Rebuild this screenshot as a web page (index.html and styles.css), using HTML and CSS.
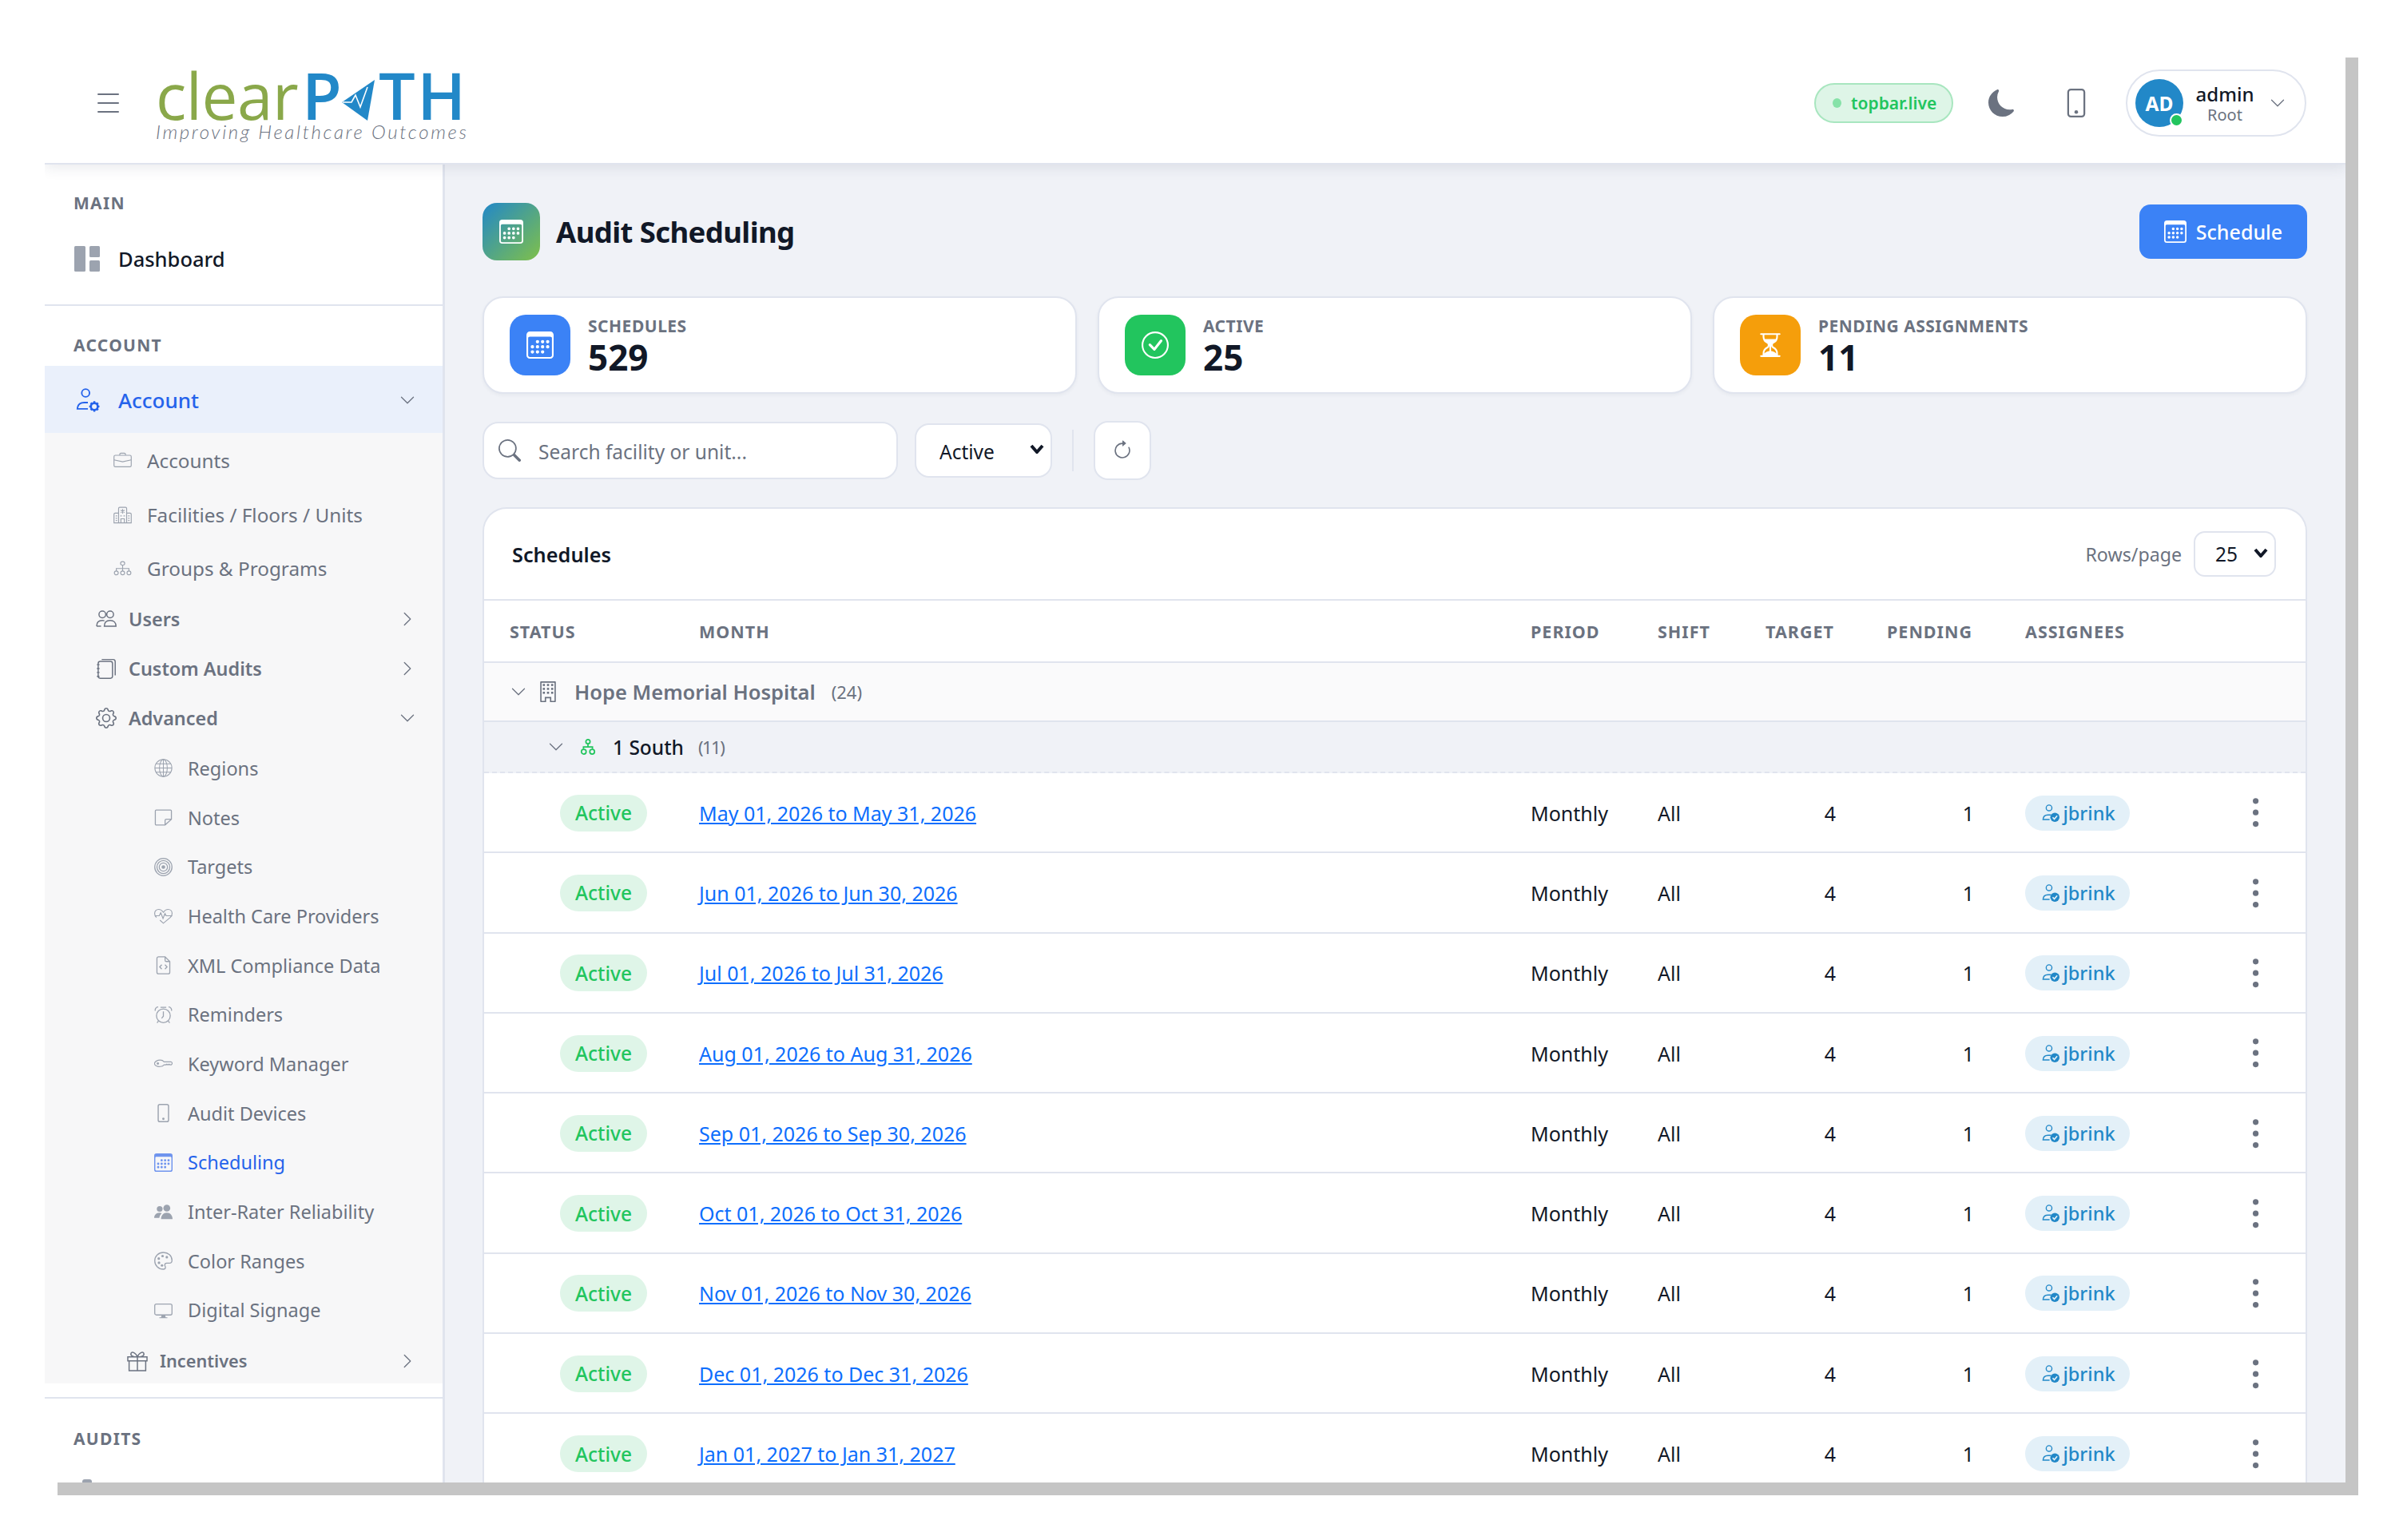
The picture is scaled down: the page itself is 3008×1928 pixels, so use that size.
FILE: index.html
```html
<!DOCTYPE html>
<html lang="en">
<head>
<meta charset="utf-8">
<title>Audit Scheduling</title>
<link rel="stylesheet" href="styles.css">
</head>
<body>
<svg class="defs" width="0" height="0" aria-hidden="true">
  <symbol id="i-cal" viewBox="0 0 16 16"><path d="M14 0H2a2 2 0 0 0-2 2v12a2 2 0 0 0 2 2h12a2 2 0 0 0 2-2V2a2 2 0 0 0-2-2zM1 3.857C1 3.384 1.448 3 2 3h12c.552 0 1 .384 1 .857v10.286c0 .473-.448.857-1 .857H2c-.552 0-1-.384-1-.857V3.857z"/><path d="M6.5 7a1 1 0 1 0 0-2 1 1 0 0 0 0 2zm3 0a1 1 0 1 0 0-2 1 1 0 0 0 0 2zm3 0a1 1 0 1 0 0-2 1 1 0 0 0 0 2zm-9 3a1 1 0 1 0 0-2 1 1 0 0 0 0 2zm3 0a1 1 0 1 0 0-2 1 1 0 0 0 0 2zm3 0a1 1 0 1 0 0-2 1 1 0 0 0 0 2zm3 0a1 1 0 1 0 0-2 1 1 0 0 0 0 2zm-9 3a1 1 0 1 0 0-2 1 1 0 0 0 0 2zm3 0a1 1 0 1 0 0-2 1 1 0 0 0 0 2zm3 0a1 1 0 1 0 0-2 1 1 0 0 0 0 2z"/></symbol>
  <symbol id="i-moon" viewBox="0 0 16 16"><path d="M6 .278a.768.768 0 0 1 .08.858 7.208 7.208 0 0 0-.878 3.46c0 4.021 3.278 7.277 7.318 7.277.527 0 1.04-.055 1.533-.16a.787.787 0 0 1 .81.316.733.733 0 0 1-.031.893A8.349 8.349 0 0 1 8.344 16C3.734 16 0 12.286 0 7.71 0 4.266 2.114 1.312 5.124.06A.752.752 0 0 1 6 .278z"/></symbol>
  <symbol id="i-phone" viewBox="0 0 16 16"><path d="M11 1a1 1 0 0 1 1 1v12a1 1 0 0 1-1 1H5a1 1 0 0 1-1-1V2a1 1 0 0 1 1-1h6zM5 0a2 2 0 0 0-2 2v12a2 2 0 0 0 2 2h6a2 2 0 0 0 2-2V2a2 2 0 0 0-2-2H5z"/><path d="M8 14a1 1 0 1 0 0-2 1 1 0 0 0 0 2z"/></symbol>
  <symbol id="i-down" viewBox="0 0 16 16"><path d="M1.646 4.646a.5.5 0 0 1 .708 0L8 10.293l5.646-5.647a.5.5 0 0 1 .708.708l-6 6a.5.5 0 0 1-.708 0l-6-6a.5.5 0 0 1 0-.708z"/></symbol>
  <symbol id="i-right" viewBox="0 0 16 16"><path d="M4.646 1.646a.5.5 0 0 1 .708 0l6 6a.5.5 0 0 1 0 .708l-6 6a.5.5 0 0 1-.708-.708L10.293 8 4.646 2.354a.5.5 0 0 1 0-.708z"/></symbol>
  <symbol id="i-search" viewBox="0 0 16 16"><path d="M11.742 10.344a6.5 6.5 0 1 0-1.397 1.398h-.001c.03.04.062.078.098.115l3.85 3.85a1 1 0 0 0 1.415-1.414l-3.85-3.85a1.007 1.007 0 0 0-.115-.1zM12 6.5a5.5 5.5 0 1 1-11 0 5.5 5.5 0 0 1 11 0z"/></symbol>
  <symbol id="i-refresh" viewBox="0 0 16 16"><path d="M8 3a5 5 0 1 0 4.546 2.914.5.5 0 0 1 .908-.417A6 6 0 1 1 8 2v1z"/><path d="M8 4.466V.534a.25.25 0 0 1 .41-.192l2.36 1.966c.12.1.12.284 0 .384L8.41 4.658A.25.25 0 0 1 8 4.466z"/></symbol>
  <symbol id="i-check" viewBox="0 0 16 16"><path d="M8 15A7 7 0 1 1 8 1a7 7 0 0 1 0 14zm0 1A8 8 0 1 0 8 0a8 8 0 0 0 0 16z"/><path d="M10.97 4.97a.235.235 0 0 0-.02.022L7.477 9.417 5.384 7.323a.75.75 0 0 0-1.06 1.06L6.97 11.03a.75.75 0 0 0 1.079-.02l3.992-4.99a.75.75 0 0 0-1.071-1.05z"/></symbol>
  <symbol id="i-hourglass" viewBox="0 0 16 16"><path d="M2.5 15a.5.5 0 1 1 0-1h1v-1a4.5 4.5 0 0 1 2.557-4.06c.29-.139.443-.377.443-.59v-.7c0-.213-.154-.451-.443-.59A4.5 4.5 0 0 1 3.5 3V2h-1a.5.5 0 0 1 0-1h11a.5.5 0 0 1 0 1h-1v1a4.5 4.5 0 0 1-2.557 4.06c-.29.139-.443.377-.443.59v.7c0 .213.154.451.443.59A4.5 4.5 0 0 1 12.5 13v1h1a.5.5 0 0 1 0 1h-11zm2-13v1c0 .537.12 1.045.337 1.5h6.326c.216-.455.337-.963.337-1.5V2h-7zm3 6.35c0 .701-.478 1.236-1.011 1.492A3.5 3.5 0 0 0 4.5 13s.866-1.299 3-1.48V8.35zm1 0v3.17c2.134.181 3 1.48 3 1.48a3.5 3.5 0 0 0-1.989-3.158C8.978 9.586 8.5 9.052 8.5 8.351z"/></symbol>
  <symbol id="i-gear" viewBox="0 0 16 16"><path d="M8 4.754a3.246 3.246 0 1 0 0 6.492 3.246 3.246 0 0 0 0-6.492zM5.754 8a2.246 2.246 0 1 1 4.492 0 2.246 2.246 0 0 1-4.492 0z"/><path d="M9.796 1.343c-.527-1.79-3.065-1.79-3.592 0l-.094.319a.873.873 0 0 1-1.255.52l-.292-.16c-1.64-.892-3.433.902-2.54 2.541l.159.292a.873.873 0 0 1-.52 1.255l-.319.094c-1.79.527-1.79 3.065 0 3.592l.319.094a.873.873 0 0 1 .52 1.255l-.16.292c-.892 1.64.901 3.434 2.541 2.54l.292-.159a.873.873 0 0 1 1.255.52l.094.319c.527 1.79 3.065 1.79 3.592 0l.094-.319a.873.873 0 0 1 1.255-.52l.292.16c1.64.893 3.434-.902 2.54-2.541l-.159-.292a.873.873 0 0 1 .52-1.255l.319-.094c1.79-.527 1.79-3.065 0-3.592l-.319-.094a.873.873 0 0 1-.52-1.255l.16-.292c.893-1.64-.902-3.433-2.541-2.54l-.292.159a.873.873 0 0 1-1.255-.52l-.094-.319zm-2.633.283c.246-.835 1.428-.835 1.674 0l.094.319a1.873 1.873 0 0 0 2.693 1.115l.291-.16c.764-.415 1.6.42 1.184 1.185l-.159.292a1.873 1.873 0 0 0 1.116 2.692l.318.094c.835.246.835 1.428 0 1.674l-.319.094a1.873 1.873 0 0 0-1.115 2.693l.16.291c.415.764-.42 1.6-1.185 1.184l-.291-.159a1.873 1.873 0 0 0-2.693 1.116l-.094.318c-.246.835-1.428.835-1.674 0l-.094-.319a1.873 1.873 0 0 0-2.692-1.115l-.292.16c-.764.415-1.6-.42-1.184-1.185l.159-.291A1.873 1.873 0 0 0 1.945 8.93l-.319-.094c-.835-.246-.835-1.428 0-1.674l.319-.094A1.873 1.873 0 0 0 3.06 4.377l-.16-.292c-.415-.764.42-1.6 1.185-1.184l.292.159a1.873 1.873 0 0 0 2.692-1.115l.094-.319z"/></symbol>
  <symbol id="i-dash" viewBox="0 0 32 32"><rect x="0" y="0" width="14" height="32" rx="1.5"/><rect x="19" y="0" width="13" height="14" rx="1.5"/><rect x="19" y="18" width="13" height="14" rx="1.5"/></symbol>
  <symbol id="i-person-gear" viewBox="0 0 16 16"><g fill="none" stroke="currentColor"><circle cx="6.5" cy="3.2" r="2.6"/><path d="M8 9.6H5.5C3 9.6 1.2 11 1 13.8h7"/></g><circle cx="12.3" cy="12.2" r="2.3" fill="none" stroke="currentColor" stroke-width="1.4"/><path d="M12.3 8.6v1.4M12.3 14.4v1.4M8.9 12.2h1.2M14.5 12.2h1.2M9.9 9.8l.9.9M13.9 13.7l.9.9M9.9 14.6l.9-.9M13.9 10.7l.9-.9" stroke="currentColor" stroke-width="1.3"/></symbol>
  <symbol id="i-person-check" viewBox="0 0 16 16"><g fill="none" stroke="currentColor"><circle cx="6.5" cy="3.2" r="2.6"/><path d="M8 9.6H5.5C3 9.6 1.2 11 1 13.8h6"/></g><circle cx="11.8" cy="11.8" r="4.2"/><path d="M9.8 11.8l1.5 1.6 2.6-3" fill="none" stroke="#e3f0f8" stroke-width="1.2"/></symbol>
  <symbol id="i-brief" viewBox="0 0 16 16"><g fill="none" stroke="currentColor" stroke-width=".8"><rect x=".5" y="3.5" width="15" height="10" rx="1.2"/><path d="M5.5 3.5V2.6c0-.6.4-1 1-1h3c.6 0 1 .4 1 1v.9M.5 7.5l7.5 1.6 7.5-1.6"/></g></symbol>
  <symbol id="i-hospital" viewBox="0 0 16 16"><g fill="none" stroke="currentColor" stroke-width=".8"><path d="M4.5 15V2.5c0-.6.4-1 1-1h5c.6 0 1 .4 1 1V15M4.5 6.5h-3c-.6 0-1 .4-1 1V15h15V7.5c0-.6-.4-1-1-1h-3M6.5 15v-3.5h3V15"/><path d="M8 3v4M6.3 4l3.4 2M9.7 4L6.3 6M2 9h1.2M2 11h1.2M2 13h1.2M12.8 9H14M12.8 11H14M12.8 13H14M6 9h1.2M8.8 9H10"/></g></symbol>
  <symbol id="i-tree" viewBox="0 0 16 16"><g fill="none" stroke="currentColor" stroke-width=".8"><rect x="6.2" y="2.2" width="3.6" height="3" rx="1.5"/><path d="M8 5.2v3M2.5 10.4V8.2h11v2.2M8 8.2v2.2"/><circle cx="2.5" cy="12" r="1.7"/><circle cx="8" cy="12" r="1.7"/><circle cx="13.5" cy="12" r="1.7"/></g></symbol>
  <symbol id="i-tree2" viewBox="0 0 16 16"><g fill="none" stroke="currentColor" stroke-width="1.4"><circle cx="8" cy="2.8" r="2.1"/><path d="M8 5v3M3.5 10V8h9v2"/><circle cx="3.8" cy="12.8" r="2.4"/><circle cx="12.2" cy="12.8" r="2.4"/></g></symbol>
  <symbol id="i-people" viewBox="0 0 16 16"><g fill="none" stroke="currentColor" stroke-width=".9"><circle cx="5" cy="4.5" r="2.6"/><circle cx="11" cy="4.5" r="2.6"/><path d="M.6 13.5c0-2.8 1.6-4.4 4.4-4.4.6 0 1.1.1 1.6.2M6.5 13.5c0-2.600 1.600-4.400 4.500-4.400s4.500 1.800 4.500 4.400z"/><path d="M.6 13.5h3.4"/></g></symbol>
  <symbol id="i-journals" viewBox="0 0 16 16"><g fill="none" stroke="currentColor" stroke-width=".9"><rect x="1.8" y="2.5" width="11" height="13" rx="1.6"/><path d="M4.5 1h8.7c1 0 1.7.7 1.7 1.7v10.6"/><path d="M.8 5h2M.8 8h2M.8 11h2M.8 14h2"/></g></symbol>
  <symbol id="i-globe" viewBox="0 0 16 16"><g fill="none" stroke="currentColor" stroke-width=".7"><circle cx="8" cy="8" r="7.4"/><ellipse cx="8" cy="8" rx="3.4" ry="7.4"/><path d="M8 .6v14.8M.6 8h14.8M1.7 4.3h12.6M1.7 11.7h12.6"/></g></symbol>
  <symbol id="i-sticky" viewBox="0 0 16 16"><path d="M1.8 1.5h12.4c.4 0 .8.4.8.8v7.2L9.5 14.5H1.8c-.4 0-.8-.4-.8-.8V2.3c0-.4.4-.8.8-.8zM9.5 14.5V10.500c0-.6.4-1 1-1H15" fill="none" stroke="currentColor" stroke-width=".9"/></symbol>
  <symbol id="i-target" viewBox="0 0 16 16"><g fill="none" stroke="currentColor" stroke-width=".9"><circle cx="8" cy="8" r="7.5"/><circle cx="8" cy="8" r="5.6"/><circle cx="8" cy="8" r="3.6"/></g><circle cx="8" cy="8" r="1.6"/></symbol>
  <symbol id="i-heart" viewBox="0 0 16 16"><path d="M2 9.500C.8 8.300.4 7.400.4 6c0-2.200 1.600-3.600 3.400-3.600 1.800 0 3.200 1.100 4.200 2.600 1-1.500 2.400-2.600 4.200-2.600 1.800 0 3.400 1.400 3.400 3.600 0 1.400-.4 2.300-1.600 3.500L8 14.500 5 11.800" fill="none" stroke="currentColor" stroke-width=".8"/><path d="M.8 8h3.600l1.300-2.600 2 5L9.400 6l1 2h5.200" fill="none" stroke="currentColor" stroke-width=".8"/></symbol>
  <symbol id="i-file-code" viewBox="0 0 16 16"><g fill="none" stroke="currentColor" stroke-width=".9"><path d="M9.5.6H3.800c-.8 0-1.400.6-1.400 1.400v12c0 .8.6 1.400 1.400 1.400h8.400c.8 0 1.400-.6 1.400-1.400V4.700zM9.5.6v3c0 .6.5 1.100 1.100 1.100h3"/><path d="M6.600 7.500L4.800 9.400l1.800 1.900M9.400 7.500l1.800 1.900-1.800 1.900"/></g></symbol>
  <symbol id="i-alarm" viewBox="0 0 16 16"><g fill="none" stroke="currentColor" stroke-width=".9"><circle cx="8" cy="8.800" r="6"/><path d="M8 5v4.200L6.500 11M1 4.500C.5 3 1.500 1.200 3.500 1.200M15 4.500c.5-1.500-.5-3.300-2.500-3.300M5.500 1.500h5M3.800 13.300L2.500 15M12.200 13.300l1.300 1.700"/></g></symbol>
  <symbol id="i-key" viewBox="0 0 16 16"><path d="M5.200 5C6.700 5 8 5.700 8.600 6.500h6c.2 0 .4 0 .6.300l.6.900c0 .2 0 .4-.2.500l-.7.900c-.2.200-.5.200-.7 0l-.7-.6-.7.600-.7-.6-.7.600-.7-.6-.7.600H8.600c-.6.800-1.900 1.500-3.400 1.500C3 11 .3 9.800.3 8S3 5 5.200 5z" fill="none" stroke="currentColor" stroke-width=".8"/><circle cx="3.200" cy="8" r="1"/></symbol>
  <symbol id="i-people-fill" viewBox="0 0 16 16"><circle cx="11" cy="4.500" r="3"/><circle cx="4.800" cy="5.200" r="2.500"/><path d="M6 14c0-3 2-5.500 5-5.500S16 11 16 14zM0 13c0-2.500 2-4.500 4.500-4.500.8 0 1.500.2 2.100.5C5.300 10.200 4.600 11.500 4.500 13z"/></symbol>
  <symbol id="i-palette" viewBox="0 0 16 16"><path d="M8 .7C3.800.7.500 3.900.5 8s3.300 7.300 7.500 7.300c1.200 0 1.800-.8 1.800-1.600 0-.9-.6-1.300-.6-2.100 0-.9.800-1.600 1.700-1.600h2.300c1.500 0 2.300-1 2.300-2.400C15.500 3.500 12.200.7 8 .7z" fill="none" stroke="currentColor" stroke-width=".9"/><circle cx="4" cy="6" r="1.100"/><circle cx="7.300" cy="3.800" r="1.100"/><circle cx="11" cy="4.800" r="1.100"/><circle cx="4.200" cy="9.700" r="1.100"/><circle cx="6.800" cy="12" r="1.100"/></symbol>
  <symbol id="i-display" viewBox="0 0 16 16"><rect x=".5" y="2.500" width="15" height="9.500" rx="1.400" fill="none" stroke="currentColor" stroke-width=".9"/><path d="M6.500 12h3l.5 2h1.500v.8h-7V14H6z"/></symbol>
  <symbol id="i-gift" viewBox="0 0 16 16"><path d="M.6 4.800h14.800v3H.6zM1.600 7.800v7.600h12.800V7.800M8 4.800v10.600M8 4.800C6.600 1.200 3.400.2 3 2.400c-.3 1.600 2 2.400 5 2.400zM8 4.800c1.400-3.600 4.600-4.600 5-2.400.3 1.600-2 2.400-5 2.400z" fill="none" stroke="currentColor" stroke-width=".9"/></symbol>
  <symbol id="i-building" viewBox="0 0 16 16"><path d="M2.500 0h11c.3 0 .5.200.5.500v15c0 .3-.2.500-.5.500h-4V13h-3v3h-4c-.3 0-.5-.200-.5-.500V.500c0-.3.200-.5.500-.5zm.5 1v14h2.500v-3h5v3H13V1z"/><rect x="4" y="2" width="1.600" height="1.600"/><rect x="7.200" y="2" width="1.600" height="1.600"/><rect x="10.400" y="2" width="1.600" height="1.600"/><rect x="4" y="5" width="1.600" height="1.600"/><rect x="7.200" y="5" width="1.600" height="1.600"/><rect x="10.400" y="5" width="1.600" height="1.600"/><rect x="4" y="8" width="1.600" height="1.600"/><rect x="7.200" y="8" width="1.600" height="1.600"/><rect x="10.400" y="8" width="1.600" height="1.600"/></symbol>
  <symbol id="i-kebab" viewBox="0 0 16 32"><circle cx="8" cy="4" r="3"/><circle cx="8" cy="16" r="3"/><circle cx="8" cy="28" r="3"/></symbol>
</svg>

<div class="window">
  <header class="topbar">
    <div class="brand">
      <button class="burger" aria-label="Menu"><span></span><span></span><span></span></button>
      <div class="logo">
        <div class="logo-word"><span class="logo-clear">clear</span><span class="logo-path">P</span><svg class="logo-arrow" viewBox="0 0 41 56"><path d="M0 31L41 3 32 54z" fill="#2288c8"/><path d="M1 31h11l5-9 6 15 9-25" fill="none" stroke="#fff" stroke-width="1.6"/></svg><span class="logo-path logo-th">TH</span></div>
        <div class="logo-tag">Improving Healthcare Outcomes</div>
      </div>
    </div>
    <div class="top-actions">
      <span class="live"><span class="live-dot"></span>topbar.live</span>
      <svg class="ic moon"><use href="#i-moon"/></svg>
      <svg class="ic phone"><use href="#i-phone"/></svg>
      <div class="user">
        <span class="avatar">AD<span class="avatar-dot"></span></span>
        <span class="user-text"><span class="user-name">admin</span><span class="user-role">Root</span></span>
        <svg class="ic user-chev"><use href="#i-down"/></svg>
      </div>
    </div>
  </header>

  <div class="shell">
    <nav class="sidebar">
      <section class="side-sec">
        <div class="side-label">MAIN</div>
        <a class="dash-item"><svg class="ic dash-ic"><use href="#i-dash"/></svg>Dashboard</a>
      </section>
      <section class="side-sec side-account">
        <div class="side-label">ACCOUNT</div>
        <a class="acct-item"><svg class="ic acct-ic"><use href="#i-person-gear"/></svg><span class="grow">Account</span><svg class="ic chev"><use href="#i-down"/></svg></a>
        <div class="submenu">
          <a class="sub1 h68"><svg class="ic si"><use href="#i-brief"/></svg>Accounts</a>
          <a class="sub1 h68"><svg class="ic si"><use href="#i-hospital"/></svg>Facilities / Floors / Units</a>
          <a class="sub1 h66"><svg class="ic si"><use href="#i-tree"/></svg>Groups &amp; Programs</a>
          <a class="grp"><svg class="ic gi"><use href="#i-people"/></svg><span class="grow">Users</span><svg class="ic chev"><use href="#i-right"/></svg></a>
          <a class="grp"><svg class="ic gi"><use href="#i-journals"/></svg><span class="grow">Custom Audits</span><svg class="ic chev"><use href="#i-right"/></svg></a>
          <a class="grp"><svg class="ic gi"><use href="#i-gear"/></svg><span class="grow">Advanced</span><svg class="ic chev"><use href="#i-down"/></svg></a>
          <a class="sub2"><svg class="ic si"><use href="#i-globe"/></svg>Regions</a>
          <a class="sub2"><svg class="ic si"><use href="#i-sticky"/></svg>Notes</a>
          <a class="sub2"><svg class="ic si"><use href="#i-target"/></svg>Targets</a>
          <a class="sub2"><svg class="ic si"><use href="#i-heart"/></svg>Health Care Providers</a>
          <a class="sub2"><svg class="ic si"><use href="#i-file-code"/></svg>XML Compliance Data</a>
          <a class="sub2"><svg class="ic si"><use href="#i-alarm"/></svg>Reminders</a>
          <a class="sub2"><svg class="ic si"><use href="#i-key"/></svg>Keyword Manager</a>
          <a class="sub2"><svg class="ic si"><use href="#i-phone"/></svg>Audit Devices</a>
          <a class="sub2 current"><svg class="ic si"><use href="#i-cal"/></svg>Scheduling</a>
          <a class="sub2"><svg class="ic si"><use href="#i-people-fill"/></svg>Inter-Rater Reliability</a>
          <a class="sub2"><svg class="ic si"><use href="#i-palette"/></svg>Color Ranges</a>
          <a class="sub2"><svg class="ic si"><use href="#i-display"/></svg>Digital Signage</a>
          <a class="grp grp-deep"><svg class="ic gi"><use href="#i-gift"/></svg><span class="grow">Incentives</span><svg class="ic chev"><use href="#i-right"/></svg></a>
        </div>
      </section>
      <section class="side-audits">
        <div class="side-label">AUDITS</div>
        <div class="peek"></div>
      </section>
    </nav>

    <main class="main">
      <div class="page-head">
        <div class="page-title"><span class="title-ic"><svg class="ic"><use href="#i-cal"/></svg></span><h1>Audit Scheduling</h1></div>
        <button class="btn-primary"><svg class="ic"><use href="#i-cal"/></svg>Schedule</button>
      </div>

      <div class="stats">
        <div class="stat"><span class="stat-ic blue"><svg class="ic"><use href="#i-cal"/></svg></span><div><div class="stat-label">SCHEDULES</div><div class="stat-value">529</div></div></div>
        <div class="stat"><span class="stat-ic green"><svg class="ic"><use href="#i-check"/></svg></span><div><div class="stat-label">ACTIVE</div><div class="stat-value">25</div></div></div>
        <div class="stat"><span class="stat-ic amber"><svg class="ic"><use href="#i-hourglass"/></svg></span><div><div class="stat-label">PENDING ASSIGNMENTS</div><div class="stat-value">11</div></div></div>
      </div>

      <div class="toolbar">
        <label class="search"><svg class="ic"><use href="#i-search"/></svg><input type="text" placeholder="Search facility or unit..."></label>
        <div class="select-wrap status-select"><select><option>Active</option></select><svg class="sel-arrow" viewBox="0 0 18 12"><path d="M2 2l7 8 7-8"/></svg></div>
        <span class="tool-sep"></span>
        <button class="refresh" aria-label="Refresh"><svg class="ic"><use href="#i-refresh"/></svg></button>
      </div>

      <section class="table-card">
        <div class="table-head">
          <h2>Schedules</h2>
          <div class="rows-page"><span>Rows/page</span><div class="select-wrap rows-select"><select><option>25</option></select><svg class="sel-arrow" viewBox="0 0 18 12"><path d="M2 2l7 8 7-8"/></svg></div></div>
        </div>
        <div class="row thead"><span>STATUS</span><span>MONTH</span><span>PERIOD</span><span>SHIFT</span><span>TARGET</span><span>PENDING</span><span>ASSIGNEES</span><span></span></div>
        <div class="group-fac"><svg class="ic chev"><use href="#i-down"/></svg><svg class="ic bld"><use href="#i-building"/></svg><strong>Hope Memorial Hospital</strong><span class="count">(24)</span></div>
        <div class="group-unit"><svg class="ic chev"><use href="#i-down"/></svg><svg class="ic unit-ic"><use href="#i-tree2"/></svg><strong>1 South</strong><span class="count">(11)</span></div>

        <div class="row item"><span class="pill">Active</span><a class="month" href="#">May 01, 2026 to May 31, 2026</a><span>Monthly</span><span>All</span><span class="num n1">4</span><span class="num n2">1</span><span class="who"><svg class="ic"><use href="#i-person-check"/></svg>jbrink</span><svg class="ic kebab"><use href="#i-kebab"/></svg></div>
        <div class="row item"><span class="pill">Active</span><a class="month" href="#">Jun 01, 2026 to Jun 30, 2026</a><span>Monthly</span><span>All</span><span class="num n1">4</span><span class="num n2">1</span><span class="who"><svg class="ic"><use href="#i-person-check"/></svg>jbrink</span><svg class="ic kebab"><use href="#i-kebab"/></svg></div>
        <div class="row item"><span class="pill">Active</span><a class="month" href="#">Jul 01, 2026 to Jul 31, 2026</a><span>Monthly</span><span>All</span><span class="num n1">4</span><span class="num n2">1</span><span class="who"><svg class="ic"><use href="#i-person-check"/></svg>jbrink</span><svg class="ic kebab"><use href="#i-kebab"/></svg></div>
        <div class="row item"><span class="pill">Active</span><a class="month" href="#">Aug 01, 2026 to Aug 31, 2026</a><span>Monthly</span><span>All</span><span class="num n1">4</span><span class="num n2">1</span><span class="who"><svg class="ic"><use href="#i-person-check"/></svg>jbrink</span><svg class="ic kebab"><use href="#i-kebab"/></svg></div>
        <div class="row item"><span class="pill">Active</span><a class="month" href="#">Sep 01, 2026 to Sep 30, 2026</a><span>Monthly</span><span>All</span><span class="num n1">4</span><span class="num n2">1</span><span class="who"><svg class="ic"><use href="#i-person-check"/></svg>jbrink</span><svg class="ic kebab"><use href="#i-kebab"/></svg></div>
        <div class="row item"><span class="pill">Active</span><a class="month" href="#">Oct 01, 2026 to Oct 31, 2026</a><span>Monthly</span><span>All</span><span class="num n1">4</span><span class="num n2">1</span><span class="who"><svg class="ic"><use href="#i-person-check"/></svg>jbrink</span><svg class="ic kebab"><use href="#i-kebab"/></svg></div>
        <div class="row item"><span class="pill">Active</span><a class="month" href="#">Nov 01, 2026 to Nov 30, 2026</a><span>Monthly</span><span>All</span><span class="num n1">4</span><span class="num n2">1</span><span class="who"><svg class="ic"><use href="#i-person-check"/></svg>jbrink</span><svg class="ic kebab"><use href="#i-kebab"/></svg></div>
        <div class="row item"><span class="pill">Active</span><a class="month" href="#">Dec 01, 2026 to Dec 31, 2026</a><span>Monthly</span><span>All</span><span class="num n1">4</span><span class="num n2">1</span><span class="who"><svg class="ic"><use href="#i-person-check"/></svg>jbrink</span><svg class="ic kebab"><use href="#i-kebab"/></svg></div>
        <div class="row item"><span class="pill">Active</span><a class="month" href="#">Jan 01, 2027 to Jan 31, 2027</a><span>Monthly</span><span>All</span><span class="num n1">4</span><span class="num n2">1</span><span class="who"><svg class="ic"><use href="#i-person-check"/></svg>jbrink</span><svg class="ic kebab"><use href="#i-kebab"/></svg></div>
      </section>
    </main>
  </div>
</div>
</body>
</html>
```
FILE: styles.css
```css
* { box-sizing: border-box; }
html, body { height: 100%; }
body {
  margin: 0;
  padding: 56px;
  background: #fff;
  font-family: "Noto Sans", "Open Sans", sans-serif;
  font-size: 25px;
  color: #111827;
  overflow: hidden;
}
.defs { position: absolute; }
.ic { display: block; fill: currentColor; flex: none; overflow: visible; }
a { color: inherit; text-decoration: none; }
button { font: inherit; border: 0; padding: 0; background: none; color: inherit; }
h1, h2 { margin: 0; }
.grow { flex: 1; }

.window {
  width: 2880px;
  height: 1800px;
  overflow: hidden;
  display: flex;
  flex-direction: column;
  background: #f0f2f7;
  box-shadow: 16px 16px 0 #c5c5c5;
}

/* top bar */
.topbar {
  height: 150px;
  flex: none;
  background: #fff;
  border-bottom: 2px solid #e0e4ee;
  box-shadow: 0 4px 16px rgba(40, 50, 80, .1);
  display: flex;
  align-items: center;
  justify-content: space-between;
  padding: 0 49px 2px 66px;
  position: relative;
  z-index: 2;
}
.brand { display: flex; align-items: center; gap: 46px; }
.burger { width: 27px; display: flex; flex-direction: column; gap: 8.5px; }
.burger span { display: block; height: 2.5px; background: #6b7280; border-radius: 2px; }
.logo { display: flex; flex-direction: column; margin-top: 6px; }
.logo-word { display: flex; align-items: baseline; height: 64px; line-height: 64px; }
.logo-clear { font-family: "Open Sans", sans-serif; font-weight: 400; font-size: 80px; color: #8aa84a; letter-spacing: -.5px; }
.logo-path { font-family: "Open Sans", sans-serif; font-weight: 600; font-size: 81px; color: #2288c8; margin-left: 5px; }
.logo-th { margin-left: 5px; letter-spacing: 2.5px; }
.logo-arrow { width: 41px; height: 56px; align-self: flex-end; margin-bottom: -2px; }
.logo-tag {
  font-family: Lato, sans-serif;
  font-style: italic;
  font-weight: 300;
  font-size: 24px;
  letter-spacing: 2.65px;
  color: #6b7280;
  margin-top: 1px;
  line-height: 26px;
}
.top-actions { display: flex; align-items: center; }
.live {
  display: flex;
  align-items: center;
  gap: 12px;
  height: 50px;
  width: 174px;
  padding-left: 21px;
  border: 2px solid #a8e6bf;
  border-radius: 25px;
  background: #def5e7;
  color: #22c55e;
  font-size: 21px;
  font-weight: 600;
}
.live-dot { width: 11px; height: 12px; border-radius: 50%; background: #86e2a8; }
.moon { width: 34px; height: 34px; color: #6b7280; margin-left: 44px; }
.phone { width: 36px; height: 36px; color: #6b7280; margin-left: 58px; }
.user {
  margin-left: 44px;
  width: 226px;
  height: 84px;
  border: 2px solid #e0e4ee;
  border-radius: 42px;
  display: flex;
  align-items: center;
  padding-left: 10px;
}
.avatar {
  width: 60px;
  height: 60px;
  border-radius: 50%;
  background: #2288c8;
  color: #fff;
  font-weight: 700;
  font-size: 24.5px;
  display: flex;
  align-items: center;
  justify-content: center;
  position: relative;
  flex: none;
}
.avatar-dot {
  position: absolute;
  right: 0;
  bottom: 0;
  width: 17px;
  height: 17px;
  border-radius: 50%;
  background: #22c55e;
  border: 2px solid #fff;
}
.user-text { display: flex; flex-direction: column; align-items: center; margin-left: 15px; width: 74px; }
.user-name { font-size: 24px; font-weight: 500; line-height: 30px; }
.user-role { font-size: 20px; line-height: 22px; color: #6b7280; }
.user-chev { width: 20px; height: 20px; color: #6b7280; margin-left: 19px; }

/* shell */
.shell { flex: 1; display: flex; min-height: 0; }
.sidebar {
  width: 501px;
  flex: none;
  background: #fff;
  border-right: 3px solid #e0e4ee;
  overflow: hidden;
}
.side-sec { border-bottom: 2px solid #e0e4ee; padding-bottom: 23px; }
.side-label {
  height: 24px;
  line-height: 24px;
  margin: 36px 0 0 36px;
  font-size: 21px;
  font-weight: 700;
  letter-spacing: 1.3px;
  color: #6b7280;
}
.dash-item {
  display: flex;
  align-items: center;
  height: 68px;
  margin-top: 24px;
  padding-left: 37px;
  font-size: 25.5px;
  font-weight: 500;
}
.dash-ic { width: 32px; height: 32px; margin-right: 23px; color: #9ca3af; }
.side-account { padding-bottom: 17px; }
.side-account .side-label { margin-top: 37px; }
.acct-item {
  display: flex;
  align-items: center;
  height: 84px;
  margin-top: 14px;
  padding: 2px 34px 0 39px;
  background: #eaf0fb;
  color: #2563eb;
  font-size: 26px;
  font-weight: 500;
}
.acct-ic { width: 30px; height: 30px; margin-right: 23px; }
.chev { width: 20px; height: 20px; color: #6b7280; }
.submenu { background: #f7f7f8; color: #6b7280; }
.sub1, .sub2, .grp { display: flex; align-items: center; }
.sub1 { padding-left: 86px; font-size: 24.3px; }
.h68 { height: 68px; }
.h66 { height: 66px; }
.si { width: 23px; height: 23px; margin-right: 19px; color: #9ca3af; }
.grp { height: 62px; padding: 0 34px 0 64px; font-size: 23.4px; font-weight: 600; }
.grp .gi { width: 26px; height: 26px; margin-right: 15px; }
.grp-deep { padding-left: 103px; padding-top: 5px; font-size: 21.7px; }
.sub2 { height: 61.7px; padding: 2px 0 0 137px; font-size: 23.5px; }
.sub2.current { color: #2563eb; }
.sub2.current .si { color: #6f94ee; }
.side-audits .side-label { margin-top: 38px; }
.peek { width: 12px; height: 12px; margin: 39px 0 0 47px; border-radius: 3px; background: #9ca3af; }

/* main */
.main { flex: 1; min-width: 0; padding: 48px 48px 0 47px; overflow: hidden; }
.page-head { display: flex; align-items: center; justify-content: space-between; height: 72px; }
.page-title { display: flex; align-items: center; gap: 20px; }
.title-ic {
  width: 72px;
  height: 72px;
  border-radius: 18px;
  background: linear-gradient(135deg, #2288c8, #7fc04a);
  color: #fff;
  display: flex;
  align-items: center;
  justify-content: center;
}
.title-ic .ic { width: 30px; height: 30px; }
h1 { font-size: 36.5px; font-weight: 700; letter-spacing: -.6px; }
.btn-primary {
  width: 210px;
  height: 68px;
  border-radius: 14px;
  background: #3b82f6;
  color: #fff;
  font-size: 25px;
  font-weight: 500;
  display: flex;
  align-items: center;
  justify-content: center;
  gap: 12px;
}
.btn-primary .ic { width: 28px; height: 28px; }
.stats { display: grid; grid-template-columns: repeat(3, 1fr); gap: 26px; margin-top: 45px; }
.stat {
  height: 122px;
  background: #fff;
  border: 2px solid #e0e4ee;
  border-radius: 26px;
  display: flex;
  align-items: center;
  gap: 22px;
  padding-left: 32px;
  box-shadow: 0 2px 4px rgba(40, 50, 80, .05);
}
.stat-ic {
  width: 76px;
  height: 76px;
  border-radius: 20px;
  color: #fff;
  display: flex;
  align-items: center;
  justify-content: center;
}
.stat-ic .ic { width: 34px; height: 34px; }
.blue { background: #3b82f6; }
.green { background: #22c55e; }
.amber { background: #f59e0b; }
.stat-label { font-size: 21px; font-weight: 700; letter-spacing: .5px; line-height: 30px; color: #6b7280; }
.stat-value { font-size: 44px; font-weight: 700; line-height: 48px; }

.toolbar { display: flex; align-items: center; margin-top: 34px; height: 74px; }
.search {
  width: 520px;
  height: 72px;
  background: #fff;
  border: 2px solid #e0e4ee;
  border-radius: 20px;
  display: flex;
  align-items: center;
  padding: 2px 0 0 18px;
  color: #6b7280;
}
.search .ic { width: 28px; height: 28px; margin: -2px 20px 0 0; }
.search input {
  flex: 1;
  min-width: 0;
  border: 0;
  outline: 0;
  background: none;
  font: inherit;
  font-size: 24.5px;
  color: #6b7280;
}
.search input::placeholder { color: #6b7280; opacity: 1; }
.select-wrap { position: relative; }
.select-wrap select {
  appearance: none;
  display: block;
  width: 100%;
  height: 100%;
  background: #fff;
  border: 2px solid #e0e4ee;
  border-radius: 18px;
  font: inherit;
  font-size: 24.5px;
  color: #111827;
}
.sel-arrow {
  position: absolute;
  width: 18px;
  height: 12px;
  fill: none;
  stroke: #111827;
  stroke-width: 4;
  top: calc(50% - 8px);
  right: 10px;
  pointer-events: none;
}
.status-select { width: 172px; height: 68px; margin-left: 21px; }
.status-select select { padding: 2px 0 0 29px; }
.tool-sep { width: 2px; height: 52px; background: #e0e4ee; margin: 0 25px; }
.refresh {
  width: 72px;
  height: 74px;
  background: #fff;
  border: 2px solid #e0e4ee;
  border-radius: 18px;
  color: #6b7280;
  display: flex;
  align-items: center;
  justify-content: center;
}
.refresh .ic { width: 26px; height: 26px; }

.table-card {
  margin-top: 34px;
  background: #fff;
  border: 2px solid #e0e4ee;
  border-bottom: 0;
  border-radius: 30px 30px 0 0;
  overflow: hidden;
}
.table-head {
  height: 115px;
  display: flex;
  align-items: center;
  justify-content: space-between;
  padding: 0 37px 0 35px;
  border-bottom: 2px solid #e0e4ee;
}
h2 { font-size: 25.3px; font-weight: 600; }
.rows-page { display: flex; align-items: center; gap: 15px; font-size: 23.2px; color: #6b7280; }
.rows-select { width: 103px; height: 57px; }
.rows-select select { padding-left: 25px; border-radius: 14px; }
.row {
  display: grid;
  grid-template-columns: 269px 1041px 159px 135px 152px 173px 1fr auto;
  align-items: center;
}
.thead {
  height: 78px;
  border-bottom: 2px solid #e0e4ee;
  font-size: 21.5px;
  font-weight: 700;
  letter-spacing: 1px;
  color: #6b7280;
}
.thead span:first-child { padding-left: 32px; }
.group-fac, .group-unit { display: flex; align-items: center; border-bottom: 2px solid #e0e4ee; }
.group-fac { height: 74px; padding-left: 33px; background: #fafafb; color: #6b7280; }
.group-fac strong { font-weight: 600; font-size: 25.5px; margin-left: 20px; }
.group-fac .bld { width: 26px; height: 26px; margin-left: 14px; }
.group-fac .count { margin-left: 20px; }
.group-unit {
  height: 64px;
  padding-left: 80px;
  background: #f0f2f7;
  border-bottom: 2px dashed #e0e4ee;
}
.group-unit strong { font-weight: 500; font-size: 24.5px; margin-left: 21px; }
.group-unit .count { letter-spacing: -1.5px; }
.unit-ic { width: 20px; height: 20px; color: #22c55e; margin-left: 20px; }
.count { font-size: 22px; color: #6b7280; margin-left: 18px; }
.item { height: 100.3px; border-bottom: 2px solid #e0e4ee; padding-top: 1px; }
.pill {
  justify-self: start;
  margin-left: 95px;
  width: 109px;
  height: 46px;
  border-radius: 23px;
  background: #dff5e8;
  color: #22c55e;
  font-size: 24.5px;
  font-weight: 500;
  display: flex;
  align-items: center;
  justify-content: center;
}
.month { color: #0d6efd; text-decoration: underline; justify-self: start; }
.num { text-align: right; }
.n1 { padding-right: 64px; }
.n2 { padding-right: 64px; }
.who {
  justify-self: start;
  width: 131px;
  height: 44px;
  border-radius: 22px;
  background: #e3f0f8;
  color: #2288c8;
  font-size: 23.5px;
  display: flex;
  align-items: center;
  justify-content: center;
  gap: 4px;
  padding-left: 3px;
  font-weight: 500;
}
.who .ic { width: 22px; height: 22px; }
.kebab { width: 19.2px; height: 38.4px; color: #6b7280; margin-right: 53px; }
```
